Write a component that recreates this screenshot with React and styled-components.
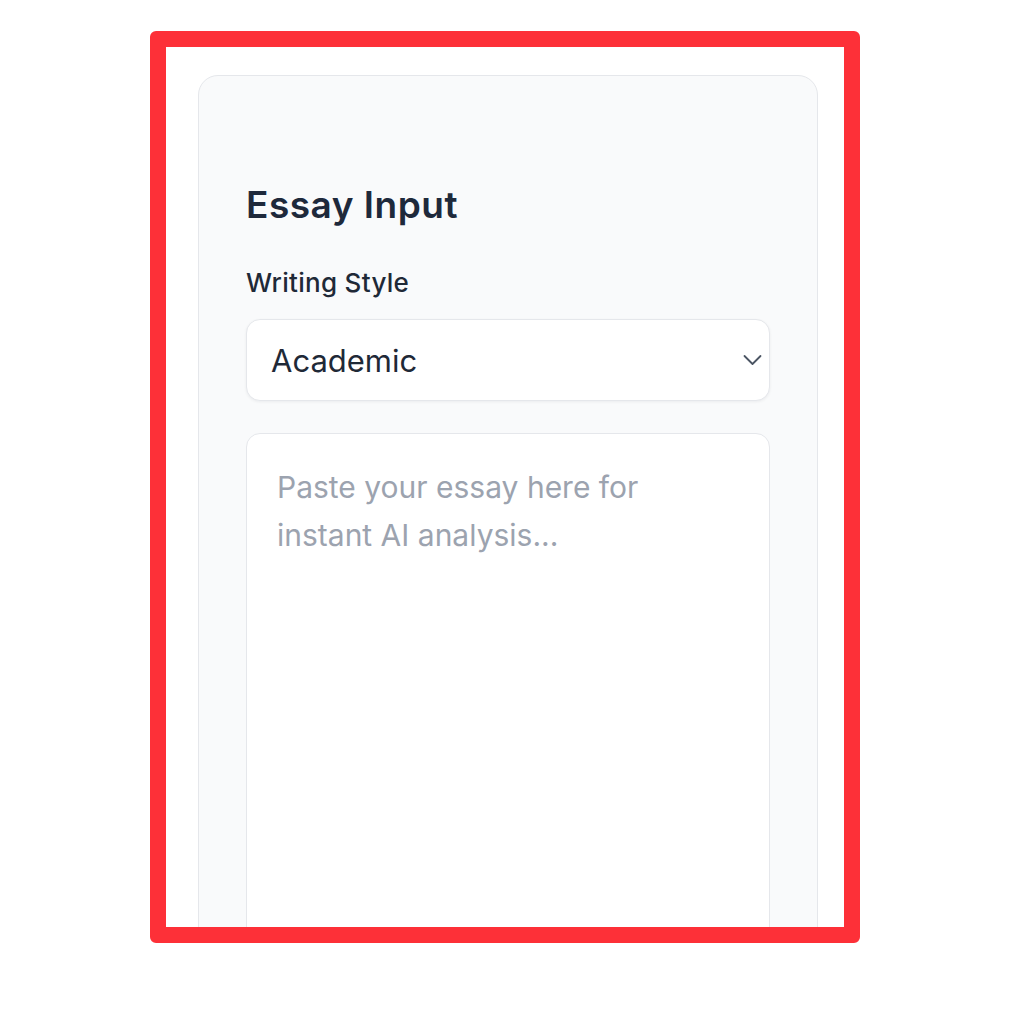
import React, { useState } from "react";
import styled, { createGlobalStyle } from "styled-components";

const GlobalStyle = createGlobalStyle`
  body {
    margin: 0;
    background: #ffffff;
    font-family: Inter, "Noto Sans", "Liberation Sans", sans-serif;
  }
  * { box-sizing: border-box; }
`;

const Page = styled.div`
  width: 1024px;
  height: 1024px;
  padding: 31px 0 0 150px;
`;

const Frame = styled.div`
  width: 710px;
  height: 912px;
  border: 16px solid #fd3038;
  border-radius: 6px;
  overflow: hidden;
  background: #ffffff;
  padding: 28px 26px 0 32px;
`;

const Card = styled.section`
  background: #f9fafb;
  border: 1px solid #e5e7eb;
  border-radius: 20px;
  padding: 106px 47px 0 47px;
  height: 1000px;
`;

const Title = styled.h2`
  margin: 0;
  font-size: 37px;
  font-weight: 600;
  color: #1e293b;
  letter-spacing: 0.5px;
`;

const Label = styled.label`
  display: block;
  margin-top: 40px;
  font-size: 26px;
  font-weight: 500;
  color: #1f2937;
  letter-spacing: 0.3px;
`;

const SelectWrap = styled.div`
  position: relative;
  margin-top: 21px;
`;

const Select = styled.select`
  appearance: none;
  width: 100%;
  height: 82px;
  padding: 0 60px 0 24px;
  border: 1px solid #e5e7eb;
  border-radius: 14px;
  background: #ffffff;
  box-shadow: 0 1px 3px rgba(15, 23, 42, 0.06);
  font-family: inherit;
  font-size: 31px;
  color: #1f2937;
  outline: none;
`;

const Chevron = styled.svg`
  position: absolute;
  right: 8px;
  top: 50%;
  transform: translateY(-50%);
  pointer-events: none;
`;

const EssayBox = styled.textarea`
  display: block;
  width: 100%;
  height: 600px;
  margin-top: 32px;
  padding: 29px 30px;
  border: 1px solid #e5e7eb;
  border-radius: 14px;
  background: #ffffff;
  font-family: inherit;
  font-size: 30px;
  line-height: 48px;
  color: #1f2937;
  resize: none;
  outline: none;

  &::placeholder {
    color: #9ca3af;
  }
`;

export default function App() {
  const [style, setStyle] = useState("academic");
  const [essay, setEssay] = useState("");

  return (
    <Page>
      <GlobalStyle />
      <Frame>
        <Card>
          <Title>Essay Input</Title>
          <Label htmlFor="writing-style">Writing Style</Label>
          <SelectWrap>
            <Select
              id="writing-style"
              value={style}
              onChange={(e) => setStyle(e.target.value)}
            >
              <option value="academic">Academic</option>
              <option value="creative">Creative</option>
              <option value="persuasive">Persuasive</option>
              <option value="technical">Technical</option>
            </Select>
            <Chevron width="19" height="11" viewBox="0 0 19 11" fill="none">
              <path
                d="M1.5 1.5l8 8 8-8"
                stroke="#4b5563"
                strokeWidth="1.8"
                strokeLinecap="round"
                strokeLinejoin="round"
              />
            </Chevron>
          </SelectWrap>
          <EssayBox
            value={essay}
            onChange={(e) => setEssay(e.target.value)}
            placeholder="Paste your essay here for instant AI analysis..."
          />
        </Card>
      </Frame>
    </Page>
  );
}
